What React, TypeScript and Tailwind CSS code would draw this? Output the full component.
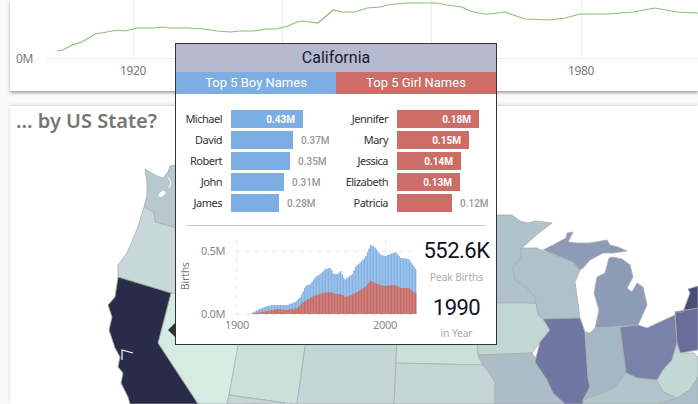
const boys = [
  { name: "Michael", value: "0.43M", width: 72, inside: true },
  { name: "David", value: "0.37M", width: 62, inside: false },
  { name: "Robert", value: "0.35M", width: 59, inside: false },
  { name: "John", value: "0.31M", width: 53, inside: false },
  { name: "James", value: "0.28M", width: 48, inside: false },
];

const girls = [
  { name: "Jennifer", value: "0.18M", width: 82, inside: true },
  { name: "Mary", value: "0.15M", width: 72, inside: true },
  { name: "Jessica", value: "0.14M", width: 64, inside: true },
  { name: "Elizabeth", value: "0.13M", width: 63, inside: true },
  { name: "Patricia", value: "0.12M", width: 55, inside: false },
];

// page coordinates traced off the chart
const blueTop = [
  [250, 315], [257, 311], [267, 307], [273, 306], [287, 306], [295, 303], [300, 298], [305, 287], [310, 285],
  [315, 278], [320, 275], [325, 270], [330, 269], [333, 275], [337, 275], [340, 272], [344, 281], [352, 275],
  [355, 268], [360, 263], [365, 258], [370, 246], [374, 248], [380, 256], [385, 257], [390, 255], [395, 253],
  [400, 259], [408, 260], [415, 270],
];
const redTop = [
  [250, 315], [267, 312], [277, 310], [287, 311], [297, 309], [303, 303], [313, 297], [323, 294], [330, 293],
  [335, 295], [340, 295], [345, 298], [353, 295], [360, 291], [365, 288], [370, 282], [377, 285], [383, 287],
  [395, 286], [400, 289], [408, 289], [415, 294],
];

function valueAt(points: number[][], x: number) {
  for (let i = 1; i < points.length; i++) {
    if (x <= points[i][0]) {
      const [x0, y0] = points[i - 1];
      const [x1, y1] = points[i];
      return y0 + ((y1 - y0) * (x - x0)) / (x1 - x0);
    }
  }
  return points[points.length - 1][1];
}

const years = Array.from({ length: 111 }, (_, i) => 250 + i * 1.5).filter((x) => x <= 415);

const states = [
  { fill: "#b7c9cf", points: "145,169 150,172 155,175 163,178 168,172 170,166 175,165 200,165 200,232 173,227 155,222 154,212 144,207 147,195 147,183" },
  { fill: "#c6d9d8", points: "144,207 154,212 155,222 173,227 200,232 200,300 171,293 118,277 118,265 127,253 138,227" },
  { fill: "#d6ebe2", points: "171,293 240,300 239,345 229,395 227,404 198,404 158,343" },
  { fill: "#282c49", points: "118,277 171,293 158,343 198,404 130,404 128,397 121,383 123,373 118,367 120,357 115,348 109,330 112,317 108,305 115,297" },
  { fill: "#cbe0d9", points: "239,340 306,340 297,404 285,403 229,395" },
  { fill: "#c3d6d5", points: "229,395 285,403 227,404" },
  { fill: "#c3d6d5", points: "306,340 397,340 394,404 297,404" },
  { fill: "#cce0da", points: "397,340 477,340 478,355 483,365 396,363" },
  { fill: "#c3d6d5", points: "396,363 483,365 489,372 495,382 495,404 394,404" },
  { fill: "#c2d6d4", points: "477,300 536,303 538,315 543,319 550,330 540,342 532,353 478,355" },
  { fill: "#adbdc7", points: "478,355 532,353 537,360 535,362 547,380 553,393 565,404 495,404 495,382 489,372 483,365" },
  { fill: "#b0c2ca", points: "490,215 512,215 520,221 528,223 535,221 552,223 540,232 523,247 521,248 521,258 513,267 515,280 527,288 535,297 536,303 490,303" },
  { fill: "#afc1ca", points: "521,248 537,248 545,252 573,262 580,270 575,282 578,303 580,318 543,319 538,315 536,303 535,297 527,288 515,280 513,267 521,258" },
  { fill: "#8d9bb7", points: "543,250 553,245 566,238 567,233 573,232 568,242 577,243 590,243 607,240 610,245 618,247 627,251 613,253 603,253 590,260 583,268 580,270 573,262" },
  { fill: "#8d9bb7", points: "612,257 622,259 630,265 633,277 627,288 632,292 637,283 643,287 647,305 638,325 595,328 599,310 594,293 597,277 605,273 609,258" },
  { fill: "#6f77a3", points: "543,319 580,318 585,332 588,377 590,387 583,400 583,404 565,404 553,393 547,380 535,362 540,342 550,330" },
  { fill: "#a5b7c4", points: "585,332 590,333 595,328 620,327 626,373 615,387 603,393 583,400 590,387 588,377" },
  { fill: "#7982a8", points: "620,327 638,325 647,328 675,315 677,343 672,360 663,370 657,380 637,378 626,373" },
  { fill: "#686e99", points: "675,312 698,308 698,350 680,353 677,343" },
  { fill: "#474d75", points: "683,312 690,293 688,289 698,286 698,308 675,312" },
  { fill: "#c3d8d5", points: "672,360 663,370 657,381 663,392 677,398 690,390 698,377 698,357 694,353 680,353 677,343" },
  { fill: "#b2c5cc", points: "583,400 603,393 615,387 626,373 637,378 657,381 663,392 677,398 658,404 583,404" },
  { fill: "#adbecb", points: "658,404 677,398 690,390 698,377 698,404" },
];

function NameBars({ rows, color }: { rows: typeof boys; color: string }) {
  return (
    <div className="flex flex-col gap-[3px]">
      {rows.map((row) => (
        <div key={row.name} className="flex h-[18px] items-center">
          <div className="w-[46px] text-right text-[11px] tracking-[-0.5px] text-[#333333]">{row.name}</div>
          <div className={`ml-[9px] flex h-full items-center justify-end ${color}`} style={{ width: row.width }}>
            {row.inside && <span className="pr-2 font-['Roboto',sans-serif] text-[10px] font-bold text-white">{row.value}</span>}
          </div>
          {!row.inside && <span className="ml-2 font-['Roboto',sans-serif] text-[10px] font-medium text-[#999999]">{row.value}</span>}
        </div>
      ))}
    </div>
  );
}

export default function App() {
  return (
    <div className="relative h-[404px] w-[698px] overflow-hidden bg-[#fafafa] font-['Noto_Sans',sans-serif]">
      <div className="ml-[10px] h-[91px] bg-white shadow-[0_2px_3px_rgba(0,0,0,0.35)]">
        <svg width="688" height="91" viewBox="10 0 688 91" className="block">
          <line x1="46" y1="58.5" x2="698" y2="58.5" stroke="#eeeeee" />
          {[133, 282, 431, 581].map((x) => (
            <line key={x} x1={x + 0.5} y1="0" x2={x + 0.5} y2="58" stroke="#eeeeee" />
          ))}
          <polyline
            fill="none"
            stroke="#8cc07a"
            strokeWidth="1.2"
            points="57,51 63,50 72,45 82,42 95,34 107,32 117,30 125,31 137,28 153,28 163,27 170,28 187,28 203,29 217,31 230,32 240,31 253,31 267,29 277,29 288,26 297,22 303,21 318,23 333,10 342,12 355,12 367,8 380,7 387,5 407,3 417,3 437,3 447,5 462,7 470,11 483,14 490,14 505,12 525,19 550,20 565,18 580,14 607,14 633,12 655,8 677,12 698,13"
          />
          <text x="16" y="63" fontSize="12" fill="#777777" className="tracking-[-0.4px]">0M</text>
          <text x="133" y="75" fontSize="12" fill="#777777" textAnchor="middle" className="tracking-[-0.4px]">1920</text>
          <text x="581" y="75" fontSize="12" fill="#777777" textAnchor="middle" className="tracking-[-0.4px]">1980</text>
        </svg>
      </div>

      <div className="ml-[10px] mt-[15px] h-[298px] bg-white shadow-[0_-1px_3px_rgba(0,0,0,0.15)]">
        <div className="h-[30px] pl-[6px] text-[20px] font-semibold leading-[30px] text-[#767676]">... by US State?</div>
        <svg width="688" height="268" viewBox="10 136 688 268" className="block">
          {states.map((state, i) => (
            <polygon key={i} points={state.points} fill={state.fill} stroke="#a9adaf" strokeWidth="0.8" strokeLinejoin="round" />
          ))}
          <polyline points="133,353 122,350 122,360" fill="none" stroke="#ffffff" strokeWidth="1.2" />
          <polyline points="168,177 171,182 169,188" fill="none" stroke="#ffffff" strokeWidth="1" />
          <ellipse cx="162" cy="194" rx="4" ry="2" fill="#ffffff" transform="rotate(-35 162 194)" />
        </svg>
      </div>

      {/* tooltip over the map */}
      <div className="absolute left-[168px] top-[322px] h-0 w-0 border-y-[8px] border-r-[8px] border-y-transparent border-r-[#333333]" />
      <div className="absolute left-[175px] top-[43px] h-[302px] w-[322px] border border-[#333333] bg-white">
        <div className="flex h-[28px] items-center justify-center bg-[#b6bace] font-['Roboto',sans-serif] text-[16px] text-[#1a1a2e]">
          California
        </div>
        <div className="flex h-[22px] font-['Roboto',sans-serif] text-[13px] text-white">
          <div className="flex w-[160px] items-center justify-center bg-[#7caee4]">Top 5 Boy Names</div>
          <div className="flex flex-1 items-center justify-center bg-[#cd6d68]">Top 5 Girl Names</div>
        </div>

        <div className="mt-4 flex">
          <div className="w-[166px]">
            <NameBars rows={boys} color="bg-[#7caee4]" />
          </div>
          <NameBars rows={girls} color="bg-[#cd6d68]" />
        </div>

        <div className="mx-[10px] mt-[13px] h-px bg-[#cccccc]" />

        <div className="flex">
          <svg width="244" height="118" viewBox="176 227 244 118" className="block">
            <line x1="236.5" y1="241" x2="236.5" y2="315" stroke="#e8e8e8" strokeDasharray="5 4" />
            <line x1="385.5" y1="241" x2="385.5" y2="315" stroke="#e8e8e8" strokeDasharray="5 4" />
            <line x1="236" y1="252.5" x2="416" y2="252.5" stroke="#e8e8e8" strokeDasharray="5 4" />
            <line x1="236" y1="315.5" x2="416" y2="315.5" stroke="#e8e8e8" strokeDasharray="5 4" />
            {years.map((x) => (
              <g key={x}>
                <rect x={x} y={valueAt(blueTop, x)} width="1.5" height={315 - valueAt(blueTop, x)} fill="#a5c7ec" />
                <rect x={x} y={valueAt(blueTop, x)} width="0.9" height={315 - valueAt(blueTop, x)} fill="#7caee4" />
                <rect x={x} y={valueAt(redTop, x)} width="1.5" height={315 - valueAt(redTop, x)} fill="#d98f8b" />
                <rect x={x} y={valueAt(redTop, x)} width="0.9" height={315 - valueAt(redTop, x)} fill="#c6605a" />
              </g>
            ))}
            <text x="225" y="256" fontSize="11" fill="#888888" textAnchor="end" className="tracking-[-0.4px]">0.5M</text>
            <text x="225" y="319" fontSize="11" fill="#888888" textAnchor="end" className="tracking-[-0.4px]">0.0M</text>
            <text x="237" y="330" fontSize="11" fill="#888888" textAnchor="middle" className="tracking-[-0.3px]">1900</text>
            <text x="385" y="330" fontSize="11" fill="#888888" textAnchor="middle" className="tracking-[-0.3px]">2000</text>
            <text x="189" y="277" fontSize="10" fill="#777777" textAnchor="middle" transform="rotate(-90 189 277)">Births</text>
          </svg>
          <div className="flex w-[73px] flex-col items-center font-['Roboto',sans-serif]">
            <div className="mt-[12px] text-[22px] leading-[26px] tracking-[-0.5px] text-[#111122]">552.6K</div>
            <div className="mt-[6px] font-['Noto_Sans',sans-serif] text-[10px] text-[#aaaaaa]">Peak Births</div>
            <div className="mt-[10px] text-[22px] leading-[26px] tracking-[-0.5px] text-[#111122]">1990</div>
            <div className="mt-[5px] font-['Noto_Sans',sans-serif] text-[10px] text-[#aaaaaa]">in Year</div>
          </div>
        </div>
      </div>
    </div>
  );
}
